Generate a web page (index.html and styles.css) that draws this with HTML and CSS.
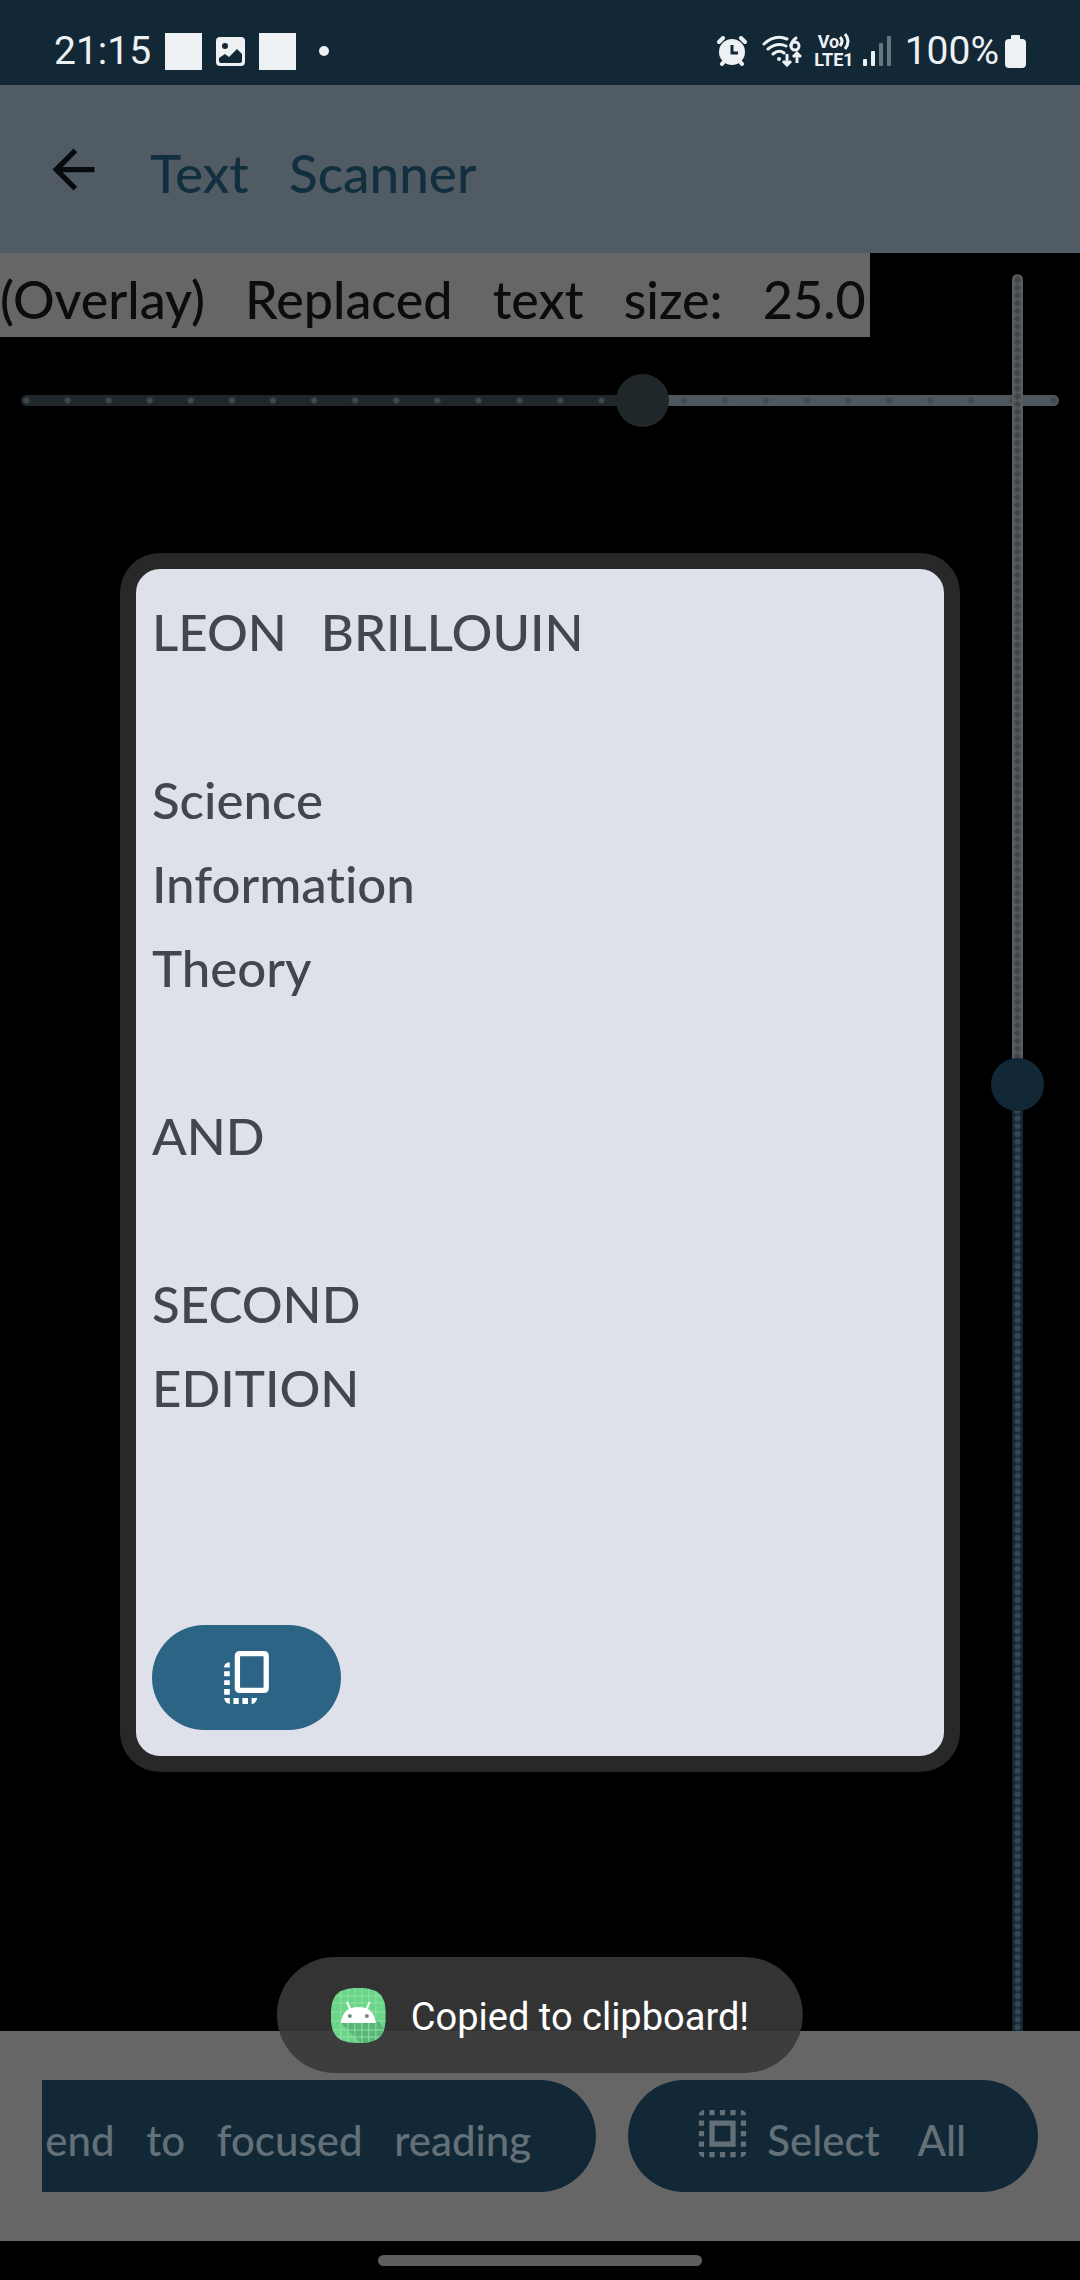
FILE: index.html
```html
<!DOCTYPE html>
<html lang="en">
<head>
<meta charset="utf-8">
<meta name="viewport" content="width=device-width, initial-scale=1">
<title>Text Scanner</title>
<link rel="stylesheet" href="styles.css">
</head>
<body>
<div class="screen">
  <div class="status">
    <div class="status-group">
      <span class="clock">21:15</span>
      <span class="notice"></span>
      <svg class="picture" viewBox="0 0 29 29" width="29" height="29" aria-hidden="true"><path fill="#eef1f3" fill-rule="evenodd" d="M4 0h21a4 4 0 0 1 4 4v21a4 4 0 0 1-4 4H4a4 4 0 0 1-4-4V4a4 4 0 0 1 4-4zM9 6a3 3 0 1 0 0 6a3 3 0 0 0 0-6zM3 21v3q0 2 2 2h19q2 0 2-2v-7l-5-5l-8 8l-4-3z"/></svg>
      <span class="notice"></span>
      <span class="more"></span>
    </div>
    <div class="status-group">
      <svg class="alarm" viewBox="0 0 30 30" width="30" height="30" aria-hidden="true"><g stroke="#eef1f3" stroke-width="4" stroke-linecap="round"><path d="M2 6l4-4M28 6l-4-4M5 28l4-5M25 28l-4-5"/></g><circle cx="15" cy="16" r="13" fill="#eef1f3"/><path d="M15 9v8h6" fill="none" stroke="#122836" stroke-width="3"/></svg>
      <svg class="wifi" viewBox="0 0 40 32" width="40" height="32" aria-hidden="true"><g fill="none" stroke="#eef1f3" stroke-width="3" stroke-linecap="round"><path d="M2 9Q13-1 25 4M6 14Q15 7 24 11M11 19Q17 14 22 18"/><path d="M34 3Q29 7 29 11"/><circle cx="33" cy="11" r="4"/></g><circle cx="17" cy="24" r="2" fill="#eef1f3"/><path d="M25 19v11M21 26l4 4l4-4M35 28V18M31 22l4-4l4 4" fill="none" stroke="#eef1f3" stroke-width="3"/></svg>
      <div class="volte">
        <span class="volte-line">Vo<svg viewBox="0 0 11 17" width="11" height="17" aria-hidden="true"><path d="M1 4q4 4 0 9M6 1q6 7 0 15" fill="none" stroke="#eef1f3" stroke-width="3"/></svg></span>
        <span class="volte-line">LTE1</span>
      </div>
      <svg class="signal" viewBox="0 0 28 30" width="28" height="30" aria-hidden="true"><g fill="#eef1f3"><rect y="23" width="4" height="7" rx="1"/><rect x="8" y="15" width="4" height="15" rx="1"/></g><g fill="#677680"><rect x="16" y="7" width="4" height="23" rx="1"/><rect x="24" width="4" height="30" rx="1"/></g></svg>
      <span class="clock">100%</span>
      <svg class="battery" viewBox="0 0 21 33" width="21" height="33" aria-hidden="true"><path fill="#eef1f3" d="M7 0h7q1 0 1 1v3h2q4 0 4 4v21q0 4-4 4H4q-4 0-4-4V8q0-4 4-4h2V1q0-1 1-1z"/></svg>
    </div>
  </div>

  <header class="appbar">
    <button class="back" aria-label="Back"><svg viewBox="0 0 24 24" width="63" height="63" aria-hidden="true"><path fill="#080b0e" d="M20 11H7.83l5.59-5.59L12 4l-8 8 8 8 1.410-1.410L7.830 13H20v-2z"/></svg></button>
    <h1 class="title"><span class="word">Text</span> <span class="word">Scanner</span></h1>
  </header>

  <main class="content">
    <div class="settings">
      <label class="size-label" for="size"><span class="word">(Overlay)</span> <span class="word">Replaced</span> <span class="word">text</span> <span class="word">size:</span> <span class="word">25.0</span></label>
      <input class="slider size-slider" id="size" type="range" min="0" max="25" value="15">
    </div>
    <input class="slider zoom-slider" type="range" min="0" max="1000" value="539" aria-label="Zoom">
  </main>

  <footer class="actions">
    <button class="pill pill-cut" aria-label="Send to focused reading"><span class="pill-text"><span class="word">end</span> <span class="word">to</span> <span class="word">focused</span> <span class="word">reading</span></span></button>
    <button class="pill pill-select">
      <svg class="pill-icon" viewBox="0 0 24 24" width="63" height="63" aria-hidden="true"><path fill="#647078" d="M3 5h2V3c-1.100 0-2 .9-2 2zm0 8h2v-2H3v2zm4 8h2v-2H7v2zM3 9h2V7H3v2zm10-6h-2v2h2V3zm6 0v2h2c0-1.100-.9-2-2-2zM5 21v-2H3c0 1.100.9 2 2 2zm-2-4h2v-2H3v2zM9 3H7v2h2V3zm2 18h2v-2h-2v2zm8-8h2v-2h-2v2zm0 8c1.100 0 2-.9 2-2h-2v2zm0-12h2V7h-2v2zm0 8h2v-2h-2v2zm-4 4h2v-2h-2v2zm0-16h2V3h-2v2zM7 17h10V7H7v10zm2-8h6v6H9V9z"/></svg>
      <span class="pill-text"><span class="word">Select</span> <span class="word">All</span></span>
    </button>
  </footer>
  <div class="nav"><span class="handle"></span></div>

  <div class="overlay">
    <section class="dialog" role="dialog" aria-label="Scanned text">
      <div class="scan">
        <p><span class="word">LEON</span> <span class="word">BRILLOUIN</span></p>
        <p>Science<br>Information<br>Theory</p>
        <p>AND</p>
        <p>SECOND<br>EDITION</p>
      </div>
      <button class="copy" aria-label="Copy text"><svg viewBox="338 212 135 160" width="45" height="53" aria-hidden="true"><rect x="378" y="220" width="87" height="111" rx="6" fill="none" stroke="#fff" stroke-width="16"/><path fill="#fff" d="M338 262v-4q4-12 17-12v16zM338 273h17v15h-17zM338 300h17v15h-17zM338 327h17v17h-17zM338 354h17v18q-15-2-17-18zM366 354h16v18h-16zM393 354h17v18h-17zM421 354h17q-2 14-14 18h-3z"/></svg></button>
    </section>
  </div>

  <div class="toast" role="status">
    <svg viewBox="0 0 55 55" width="55" height="55" aria-hidden="true">
      <clipPath id="squircle"><path d="M27.500 0C48 0 55 7 55 27.500S48 55 27.500 55S0 48 0 27.500S7 0 27.500 0z"/></clipPath>
      <g clip-path="url(#squircle)"><rect width="55" height="55" fill="#6bd588"/><path fill="#58b778" d="M10 35l21 21h24V43L45 30z"/><path d="M10 0v55M17 0v55M24 0v55M31 0v55M38 0v55M45 0v55M0 8h55M0 15h55M0 24h55M0 33h55M0 42h55M0 49h55" stroke="#8ee3a4" stroke-width="1"/></g>
      <path d="M10 35q2-16 17.500-16T45 35z" fill="#fff"/><path d="M16 14l4 8M39 14l-4 8" stroke="#fff" stroke-width="2"/><circle cx="19" cy="28" r="2" fill="#6b8f80"/><circle cx="36" cy="28" r="2" fill="#6b8f80"/>
    </svg>
    <span>Copied to clipboard!</span>
  </div>
</div>
</body>
</html>
```
FILE: styles.css
```css
* { box-sizing: border-box; }

body {
  margin: 0;
  background: #000;
  font-family: Lato, "Liberation Sans", sans-serif;
  font-weight: 500;
  font-variant-ligatures: none;
}

button {
  border: 0;
  padding: 0;
  background: none;
  font: inherit;
  color: inherit;
}

svg { display: block; flex: none; }

p { margin: 0; }

.screen {
  position: relative;
  min-height: 100vh;
  display: flex;
  flex-direction: column;
}

.word + .word { margin-left: 27px; }

/* status bar */
.status {
  display: flex;
  justify-content: space-between;
  padding: 17px 54px 0;
  background: #122836;
  color: #eef1f3;
  font: 400 39px/68px Roboto, sans-serif;
}
.status-group { display: flex; align-items: center; }
.notice { width: 37px; height: 37px; margin-left: 14px; background: #eef1f3; }
.picture { margin-left: 14px; }
.more { width: 10px; height: 10px; margin-left: 23px; border-radius: 50%; background: #eef1f3; }
.wifi { margin-left: 15px; }
.volte { margin-left: 12px; font: 700 18px/18px Roboto, sans-serif; }
.volte-line { display: flex; justify-content: center; }
.signal { margin-left: 9px; }
.signal + .clock { margin-left: 14px; }
.battery { margin-left: 6px; }

/* app bar */
.appbar {
  display: flex;
  align-items: center;
  gap: 45px;
  padding: 42px;
  background: #505b64;
}
.title {
  margin: 0;
  padding-top: 8px;
  font-size: 53px;
  line-height: 76px;
  font-weight: 500;
  color: #122f3f;
}

/* sliders */
.content {
  flex: 1;
  display: grid;
}
.content > * { grid-area: 1 / 1; }
.size-label {
  display: inline-block;
  padding: 8px 4px 0 0;
  background: #666;
  color: #0a0c0d;
  font-size: 52px;
  line-height: 76px;
}
.slider {
  -webkit-appearance: none;
  appearance: none;
  margin: 0;
}
.slider::-webkit-slider-thumb {
  -webkit-appearance: none;
  width: 53px;
  height: 53px;
  border-radius: 50%;
}
.size-slider {
  display: block;
  width: calc(100% - 42px);
  height: 11px;
  margin: 58px 21px 0;
  border-radius: 6px;
  background:
    radial-gradient(circle, #42494e 2px, transparent 4px) -15px 0 / calc((100% - 11px) / 25) 11px repeat-x,
    linear-gradient(90deg, #20272b 60%, #4e575d 60%);
}
.size-slider::-webkit-slider-runnable-track {
  height: 11px;
  margin: 0 -21px;
}
.size-slider::-webkit-slider-thumb {
  margin-top: -21px;
  background: #20272b;
}
.zoom-slider {
  writing-mode: vertical-lr;
  direction: rtl;
  justify-self: end;
  width: 11px;
  height: calc(100% - 21px);
  margin: 21px 57px 0 0;
  border-radius: 6px 6px 0 0;
  background:
    radial-gradient(circle, #3c464c 2px, transparent 4px) 0 2px / 11px calc(100% / 226) repeat-y,
    linear-gradient(#5a5b5c 46%, #122836 46%);
}
.zoom-slider::-webkit-slider-runnable-track {
  width: 11px;
  margin: -21px 0;
}
.zoom-slider::-webkit-slider-thumb {
  margin-left: -21px;
  background: #122836;
}

/* bottom actions */
.actions {
  display: flex;
  gap: 32px;
  padding: 49px 42px;
  background: #666;
}
.pill {
  flex: none;
  display: flex;
  align-items: center;
  gap: 13px;
  height: 112px;
  border-radius: 56px;
  background: #122836;
  color: #647078;
  font-size: 42px;
  white-space: nowrap;
}
.pill-cut {
  flex: 1;
  min-width: 0;
  justify-content: flex-end;
  padding-right: 65px;
  border-radius: 0 56px 56px 0;
}
.pill-cut .word + .word { margin-left: 21px; }
.pill-select { padding: 0 72px 0 63px; }
.pill-text { padding-top: 8px; }
.pill-icon { margin-bottom: 6px; }

.nav {
  display: flex;
  justify-content: center;
  padding: 14px 0;
}
.handle { width: 30%; height: 11px; border-radius: 6px; background: #5e5e5e; }

/* scanned text dialog */
.overlay {
  position: absolute;
  inset: 85px 120px 41px;
  display: flex;
  align-items: center;
}
.dialog {
  width: 100%;
  padding: 21px 16px 26px;
  border: 16px solid #282828;
  border-radius: 40px;
  background: #dee1e9;
}
.scan {
  display: grid;
  gap: 84px;
  padding-bottom: 195px;
  font-size: 51px;
  line-height: 84px;
  color: #42474b;
}
.scan .word + .word { margin-left: 21px; }
.copy {
  display: flex;
  align-items: center;
  justify-content: center;
  width: 189px;
  height: 105px;
  border-radius: 53px;
  background: #2b6485;
}

/* toast */
.toast {
  position: absolute;
  bottom: 207px;
  left: 50%;
  transform: translateX(-50%);
  display: flex;
  align-items: center;
  gap: 25px;
  padding: 30px 54px;
  border-radius: 58px;
  background: rgba(57, 57, 57, 0.9);
  color: #fff;
  font: 400 38px/52px Roboto, sans-serif;
  white-space: nowrap;
}
.toast span { padding-top: 4px; }
```
